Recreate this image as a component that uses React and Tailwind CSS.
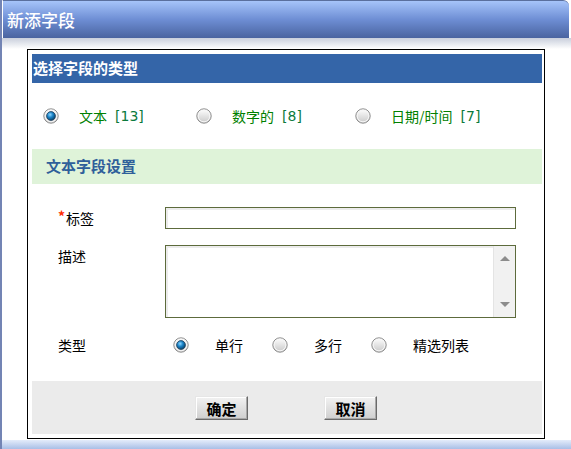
import React from "react";

const Radio = ({ checked }) => (
  <svg width="16" height="16" viewBox="0 0 16 16" className="shrink-0">
    <defs>
      <linearGradient id="rg-off" x1="0" y1="0" x2="0" y2="1">
        <stop offset="0" stopColor="#ffffff" />
        <stop offset="1" stopColor="#c8c8c8" />
      </linearGradient>
      <radialGradient id="rg-on" cx="0.4" cy="0.35" r="0.7">
        <stop offset="0" stopColor="#8fd6ff" />
        <stop offset="0.45" stopColor="#1a84c8" />
        <stop offset="1" stopColor="#06385e" />
      </radialGradient>
    </defs>
    <circle cx="8" cy="8" r="7.2" fill="url(#rg-off)" stroke="#8e8e8e" strokeWidth="1" />
    <circle cx="8" cy="8" r="5.8" fill="none" stroke="#f6f6f6" strokeWidth="1" />
    {checked && <circle cx="8" cy="8" r="4.4" fill="url(#rg-on)" stroke="#1d3f5c" strokeWidth="0.8" />}
  </svg>
);

const Option = ({ checked, label, count, className }) => (
  <div className={"flex items-center " + className}>
    <Radio checked={checked} />
    <span className="ml-[20px] text-[14px] text-[#008000]">{label}</span>
    <span className="ml-[8px] text-[14px] text-[#0b7a3c]" style={{ fontFamily: '"DejaVu Sans", sans-serif' }}>[{count}]</span>
  </div>
);

const TypeOption = ({ checked, label }) => (
  <div className="flex items-center w-[99px]">
    <Radio checked={checked} />
    <span className="ml-[26px] text-[14px] text-black">{label}</span>
  </div>
);

const Button = ({ children, className }) => (
  <button className={"w-[53px] h-[24px] border border-t-[#e6e6e6] border-l-[#e6e6e6] border-b-[#6a6a6a] border-r-[#6a6a6a] bg-gradient-to-b from-[#f2f2f2] to-[#cfcfcf] shadow-[inset_-1px_-1px_0_#a8a8a8,inset_1px_1px_0_#ffffff] text-[15px] font-bold text-black leading-none " + className}>
    {children}
  </button>
);

export default function App() {
  return (
    <div
      className="w-[571px] h-[449px] overflow-hidden bg-white border-l-2 border-l-[#7384b4] flex flex-col"
      style={{ fontFamily: '"Noto Sans CJK SC", sans-serif' }}
    >
      {/* title bar */}
      <div className="h-[38px] shrink-0 mr-[2px] rounded-tr-[6px] border-t border-t-[#5a6f9e] bg-gradient-to-b from-[#a6c4fa] via-[#6e8ed4] to-[#4a64a0] flex items-center pl-[4px] border-l border-l-white">
        <span className="text-white text-[17px] font-medium">新添字段</span>
      </div>
      <div className="h-[11px] shrink-0 bg-gradient-to-b from-[#c9cfdc] to-white" />

      {/* dialog box */}
      <div className="ml-[25px] w-[518px] h-[390px] shrink-0 border border-black pl-[4px] pr-[2px] pt-[4px] pb-[4px] flex flex-col">
        <div className="h-[29px] bg-[#3465a8] flex items-center pl-[1px] text-white text-[15px] font-bold">
          选择字段的类型
        </div>

        <div className="h-[66px] flex items-center pl-[11px]">
          <Option checked label="文本" count="13" className="w-[153px]" />
          <Option label="数字的" count="8" className="w-[159px]" />
          <Option label="日期/时间" count="7" className="" />
        </div>

        <div className="h-[35px] bg-[#dff3d9] flex items-center pl-[14px] text-[#2f5f9a] text-[15px] font-bold">
          文本字段设置
        </div>

        <div className="flex-1 pl-[26px] pt-[23px] text-[14px] text-black">
          <div className="flex items-center h-[22px]">
            <div className="w-[107px] flex items-center">
              <span className="text-[#ff2a00] font-bold text-[14px] mr-[1px] -mt-[3px]">*</span>
              <span>标签</span>
            </div>
            <div className="w-[351px] h-[22px] border border-[#5d6b3c] bg-white shadow-[inset_2px_2px_0_#ececec]" />
          </div>

          <div className="flex mt-[16px]">
            <div className="w-[107px] pt-[1px]">描述</div>
            <div className="w-[351px] h-[73px] border border-[#5d6b3c] bg-white shadow-[inset_2px_2px_0_#ececec] flex justify-end">
              <div className="w-[22px] h-full bg-[#f1f1f1] border-l border-l-[#e4e4e4] flex flex-col items-center justify-between py-[10px]">
                <div className="w-0 h-0 border-l-[5px] border-r-[5px] border-b-[5px] border-l-transparent border-r-transparent border-b-[#8c8c8c]" />
                <div className="w-0 h-0 border-l-[5px] border-r-[5px] border-t-[5px] border-l-transparent border-r-transparent border-t-[#8c8c8c]" />
              </div>
            </div>
          </div>

          <div className="flex items-center h-[30px] mt-[12px]">
            <div className="w-[115px]">类型</div>
            <TypeOption checked label="单行" />
            <TypeOption label="多行" />
            <TypeOption label="精选列表" />
          </div>
        </div>

        <div className="h-[53px] shrink-0 bg-[#ebebeb] flex items-start pt-[15px] pl-[163px]">
          <Button>确定</Button>
          <Button className="ml-[76px]">取消</Button>
        </div>
      </div>

      <div className="h-[1px] shrink-0" />
      <div className="flex-1 bg-gradient-to-b from-[#e4ecfa] to-[#a9bfe6]" />
    </div>
  );
}
